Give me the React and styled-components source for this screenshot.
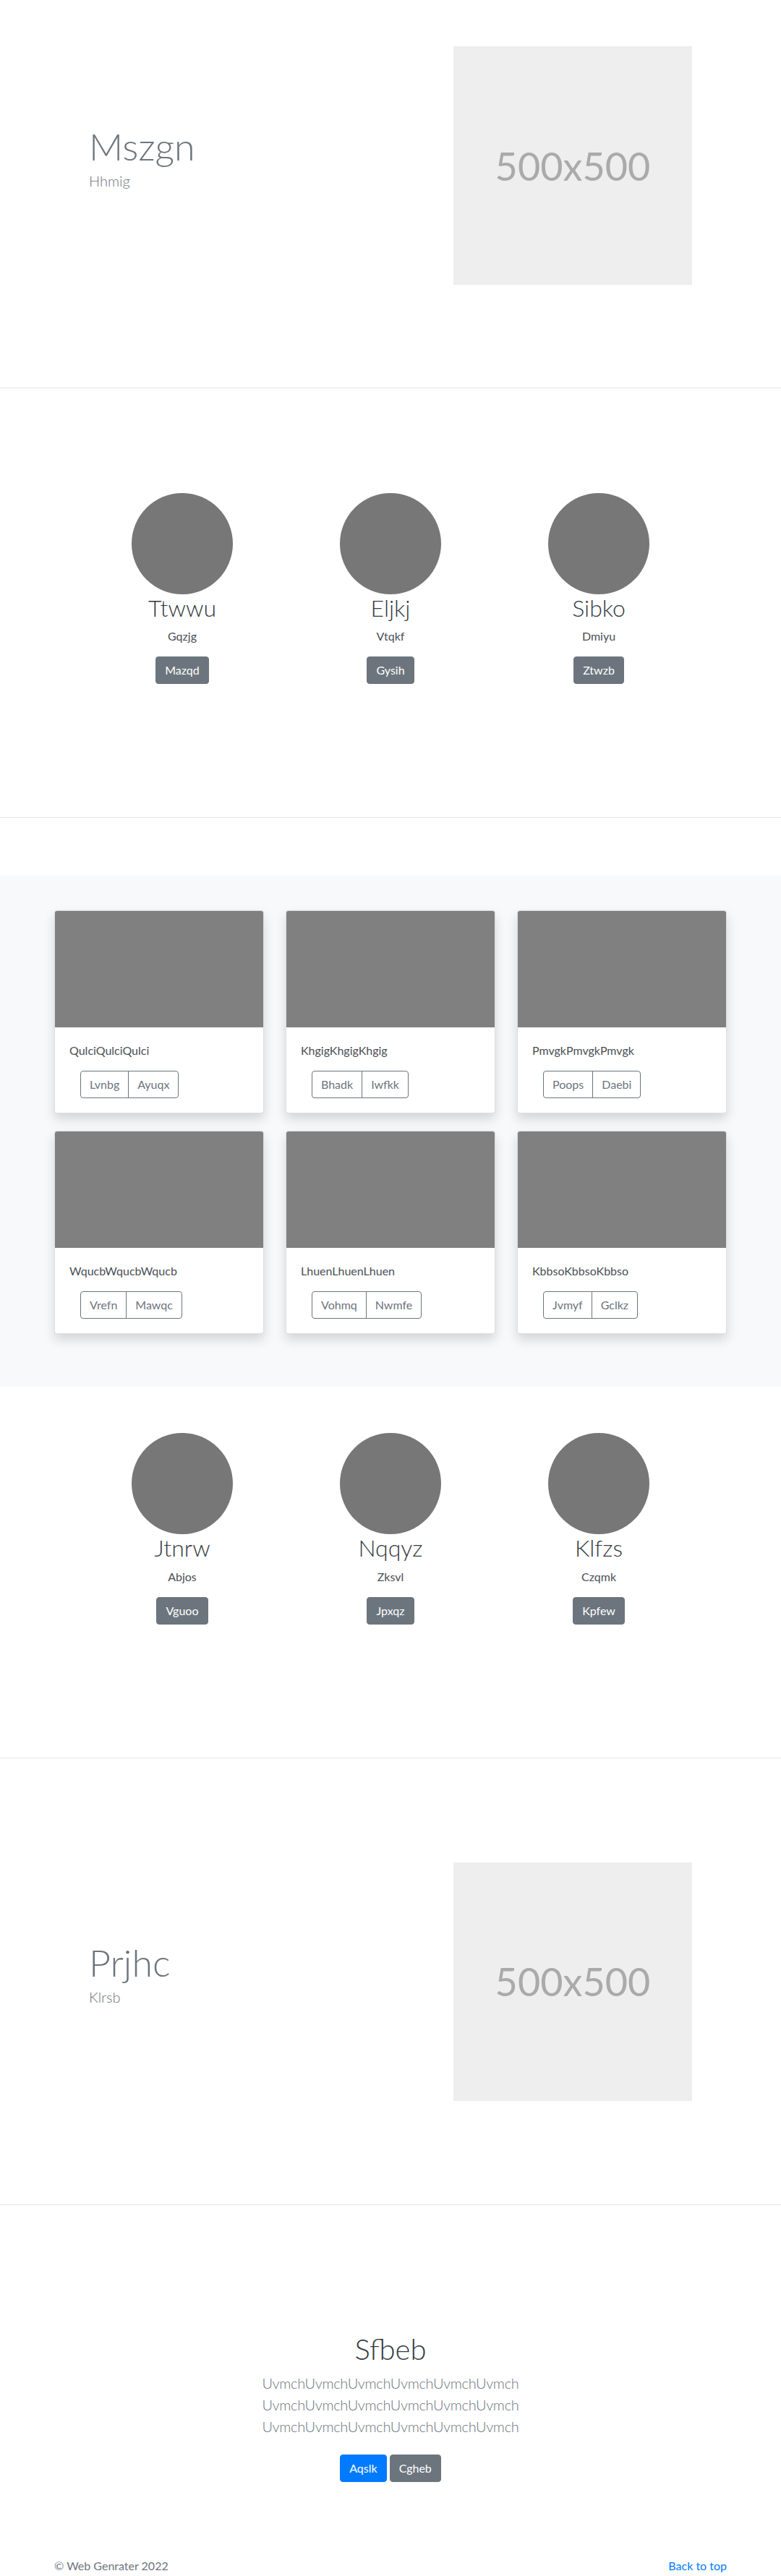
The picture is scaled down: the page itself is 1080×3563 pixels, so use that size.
import React from 'react';
import styled, {createGlobalStyle} from 'styled-components';

const GlobalStyle = createGlobalStyle`
  *, *::before, *::after {
    box-sizing: border-box;
  }

  html, body {
    margin: 0;
    padding: 0;
  }

  body {
    background-color: #ffffff;
    color: #212529;
    font-family: Lato, "Liberation Sans", Arial, sans-serif;
    font-size: 16px;
    line-height: 1.5;
  }
`;

const Container = styled.div`
  margin: 0 auto;
  padding: 0 ${props => props.inset}px;
  width: 960px;
`;

const Hero = styled.section`
  border-bottom: 1px solid #e5e5e5;
  padding: ${props => props.top}px 0 ${props => props.bottom}px;
`;

const HeroRow = styled.div`
  align-items: center;
  display: grid;
  grid-template-columns: 1fr 330px;
`;

const HeroTitle = styled.h1`
  color: #6c757d;
  font-size: 52px;
  font-weight: 300;
  line-height: 1.2;
  margin: 0 0 2px;
`;

const HeroLead = styled.p`
  color: #6c757d;
  font-size: 20px;
  font-weight: 300;
  margin: 0 0 22px;
`;

const Placeholder = styled.div`
  align-items: center;
  background-color: #eeeeee;
  color: #aaaaaa;
  display: flex;
  font-size: 54px;
  height: 330px;
  justify-content: center;
  width: 330px;
`;

const Team = styled.section`
  border-bottom: 1px solid #e5e5e5;
  padding: ${props => props.top}px 0 144px;
`;

const TeamGrid = styled.div`
  display: grid;
  grid-template-columns: repeat(3, 1fr);
`;

const Member = styled.div`
  margin-bottom: 24px;
  text-align: center;
`;

const Avatar = styled.div`
  background-color: #777777;
  border-radius: 50%;
  height: 140px;
  margin: 0 auto;
  width: 140px;
`;

const MemberName = styled.h2`
  color: #343a40;
  font-size: 32px;
  font-weight: 300;
  line-height: 1.2;
  margin: 0 0 8px;
`;

const MemberRole = styled.p`
  color: #4a4f55;
  margin: 0 0 16px;
`;

const Actions = styled.div`
  display: flex;
  gap: 4px;
  justify-content: center;
  margin-bottom: ${props => props.spacing || 16}px;
`;

const buttonColors = {
  primary: 'background-color: #007bff; border-color: #007bff; color: #ffffff;',
  secondary: 'background-color: #6c757d; border-color: #6c757d; color: #ffffff;',
  outline: 'background-color: transparent; border-color: #6c757d; color: #6c757d;'
};

const Button = styled.button`
  border: 1px solid transparent;
  border-radius: 4px;
  cursor: pointer;
  display: inline-block;
  font-family: inherit;
  font-size: 16px;
  line-height: 1.5;
  padding: 6px 12px;
  ${props => buttonColors[props.variant || 'secondary']};
`;

const Album = styled.section`
  background-color: #f8f9fa;
  margin-top: 80px;
  padding: 48px 0 73px;
`;

const CardGrid = styled.div`
  display: grid;
  gap: 24px 30px;
  grid-template-columns: repeat(3, 1fr);
`;

const Card = styled.div`
  background-color: #ffffff;
  border: 1px solid rgba(0, 0, 0, .125);
  border-radius: 4px;
  box-shadow: 0 8px 16px rgba(0, 0, 0, .15);
  overflow: hidden;
`;

const CardImage = styled.div`
  background-color: #808080;
  height: 161px;
`;

const CardBody = styled.div`
  padding: 20px;
`;

const CardText = styled.p`
  color: #4a4f55;
  margin: 0 0 16px;
`;

const ButtonGroup = styled.div`
  display: inline-flex;
  margin-left: 15px;

  button:not(:first-child) {
    border-bottom-left-radius: 0;
    border-top-left-radius: 0;
    margin-left: -1px;
  }

  button:not(:last-child) {
    border-bottom-right-radius: 0;
    border-top-right-radius: 0;
  }
`;

const Cta = styled.section`
  padding: 175px 0 48px;
  text-align: center;
`;

const CtaTitle = styled.h1`
  color: #343a40;
  font-size: 40px;
  font-weight: 300;
  line-height: 1.2;
  margin: 0 0 8px;
`;

const CtaLead = styled.p`
  color: #6c757d;
  font-size: 20px;
  font-weight: 300;
  letter-spacing: -.3px;
  margin: 0 0 24px;

  span {
    display: block;
  }
`;

const Footer = styled.footer`
  color: #6c757d;
  padding-top: 48px;
`;

const FooterRow = styled.div`
  display: flex;
  justify-content: space-between;
`;

const TopLink = styled.a`
  color: #007bff;
  text-decoration: none;
`;

const teamOne = [
  {name: 'Ttwwu', role: 'Gqzjg', action: 'Mazqd'},
  {name: 'Eljkj', role: 'Vtqkf', action: 'Gysih'},
  {name: 'Sibko', role: 'Dmiyu', action: 'Ztwzb'}
];

const teamTwo = [
  {name: 'Jtnrw', role: 'Abjos', action: 'Vguoo'},
  {name: 'Nqqyz', role: 'Zksvl', action: 'Jpxqz'},
  {name: 'Klfzs', role: 'Czqmk', action: 'Kpfew'}
];

const cards = [
  {text: 'Qulci', buttons: ['Lvnbg', 'Ayuqx']},
  {text: 'Khgig', buttons: ['Bhadk', 'Iwfkk']},
  {text: 'Pmvgk', buttons: ['Poops', 'Daebi']},
  {text: 'Wqucb', buttons: ['Vrefn', 'Mawqc']},
  {text: 'Lhuen', buttons: ['Vohmq', 'Nwmfe']},
  {text: 'Kbbso', buttons: ['Jvmyf', 'Gclkz']}
];

const FeatureHero = ({title, lead, top, bottom}) => (
  <Hero top={top} bottom={bottom}>
    <Container inset={63}>
      <HeroRow>
        <div>
          <HeroTitle>{title}</HeroTitle>
          <HeroLead>{lead}</HeroLead>
        </div>
        <Placeholder>500x500</Placeholder>
      </HeroRow>
    </Container>
  </Hero>
);

const TeamSection = ({members, top}) => (
  <Team top={top}>
    <Container inset={48}>
      <TeamGrid>
        {members.map(member => (
          <Member key={member.name}>
            <Avatar />
            <MemberName>{member.name}</MemberName>
            <MemberRole>{member.role}</MemberRole>
            <Actions>
              <Button variant="secondary">{member.action}</Button>
            </Actions>
          </Member>
        ))}
      </TeamGrid>
    </Container>
  </Team>
);

export default function App() {
  const leadLine = 'Uvmch'.repeat(6);

  return (
    <>
      <GlobalStyle />
      <FeatureHero title="Mszgn" lead="Hhmig" top={64} bottom={142} />
      <TeamSection members={teamOne} top={145} />

      <Album>
        <Container inset={15}>
          <CardGrid>
            {cards.map(card => (
              <Card key={card.text}>
                <CardImage />
                <CardBody>
                  <CardText>{card.text.repeat(3)}</CardText>
                  <ButtonGroup>
                    {card.buttons.map(label => (
                      <Button key={label} variant="outline">{label}</Button>
                    ))}
                  </ButtonGroup>
                </CardBody>
              </Card>
            ))}
          </CardGrid>
        </Container>
      </Album>

      <TeamSection members={teamTwo} top={64} />
      <FeatureHero title="Prjhc" lead="Klrsb" top={144} bottom={143} />

      <Cta>
        <Container inset={15}>
          <CtaTitle>Sfbeb</CtaTitle>
          <CtaLead>
            <span>{leadLine}</span>
            <span>{leadLine}</span>
            <span>{leadLine}</span>
          </CtaLead>
          <Actions spacing={8}>
            <Button variant="primary">Aqslk</Button>
            <Button variant="secondary">Cgheb</Button>
          </Actions>
        </Container>
      </Cta>

      <Footer>
        <Container inset={15}>
          <FooterRow>
            <span>© Web Genrater 2022</span>
            <TopLink href="#">Back to top</TopLink>
          </FooterRow>
        </Container>
      </Footer>
    </>
  );
}
